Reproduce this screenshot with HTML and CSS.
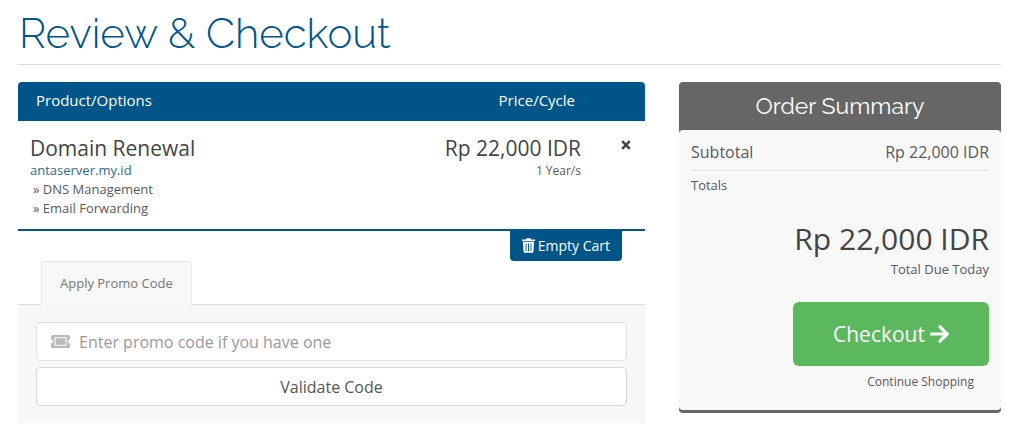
FILE: index.html
```
<!DOCTYPE html>
<html lang="en">

<head>
  <meta charset="UTF-8">
  <meta name="viewport" content="width=device-width, initial-scale=1.0">
  <title>Review &amp; Checkout</title>
  <link rel="stylesheet" href="styles.css">
</head>

<body>
  <div class="container">
    <h1 class="page-title">Review &amp; Checkout</h1>

    <div class="columns">
      <main class="cart">
        <table class="cart-items">
          <thead>
            <tr>
              <th>Product/Options</th>
              <th class="price">Price/Cycle</th>
              <th class="remove"></th>
            </tr>
          </thead>
          <tbody>
            <tr>
              <td>
                <div class="item-title">Domain Renewal</div>
                <a class="item-domain" href="#">antaserver.my.id</a>
                <ul class="item-addons">
                  <li>» DNS Management</li>
                  <li>» Email Forwarding</li>
                </ul>
              </td>
              <td class="price">
                <div class="item-price">Rp 22,000 IDR</div>
                <div class="item-cycle">1 Year/s</div>
              </td>
              <td class="remove">
                <button type="button" class="btn-remove" aria-label="Remove">
                  <svg width="10" height="10" viewBox="0 0 10 10">
                    <path d="M1.2 1.2 8.8 8.8M8.8 1.2 1.2 8.8" fill="none" stroke="currentColor" stroke-width="2.6" />
                  </svg>
                </button>
              </td>
            </tr>
          </tbody>
        </table>

        <div class="empty-cart">
          <button type="button" class="btn-empty">
            <svg width="13" height="15" viewBox="0 0 13 15">
              <path d="M0 1.6h3.8L4.6.3h3.8l.8 1.3H13v1.6H0z" fill="currentColor" />
              <path fill-rule="evenodd" d="M1 4h11l-.5 9.4q-.1 1.4-1.5 1.4H3q-1.4 0-1.5-1.4zM3.6 5.6v7.4h.9V5.6zM6 5.6v7.4h1V5.6zM8.5 5.6v7.4h.9V5.6z" fill="currentColor" />
            </svg>
            <span>Empty Cart</span>
          </button>
        </div>

        <!-- Promo code tab -->
        <div class="tabs">
          <button type="button" class="tab">Apply Promo Code</button>
        </div>
        <form class="promo">
          <div class="field">
            <label for="promocode" aria-label="Promo code">
              <svg width="19" height="13" viewBox="0 0 19 13">
                <path fill-rule="evenodd" d="M1.5 0h16Q19 0 19 1.5v3a2 2 0 0 0 0 4v3q0 1.5-1.5 1.5h-16Q0 13 0 11.5v-3a2 2 0 0 0 0-4v-3Q0 0 1.5 0zM3.5 2.2v8.6h12V2.2z" fill="currentColor" />
                <path d="M4.5 3.2h10v6.6h-10z" fill="currentColor" />
              </svg>
            </label>
            <input type="text" id="promocode" placeholder="Enter promo code if you have one">
          </div>
          <button type="button" class="btn-validate">Validate Code</button>
        </form>
      </main>

      <aside class="summary">
        <h2>Order Summary</h2>
        <div class="summary-body">
          <div class="subtotal">
            <span>Subtotal</span>
            <span>Rp 22,000 IDR</span>
          </div>
          <div class="totals">Totals</div>
          <div class="total-due">
            <span class="amount">Rp 22,000 IDR</span>
            <span>Total Due Today</span>
          </div>
          <div class="actions">
            <button type="button" class="btn-checkout">
              <span>Checkout</span>
              <svg width="19" height="18" viewBox="0 0 19 18">
                <path d="M1.5 9h15M10 1.8 17.2 9 10 16.2" fill="none" stroke="currentColor" stroke-width="3.2" stroke-linecap="round" stroke-linejoin="round" />
              </svg>
            </button>
            <a class="continue" href="#">Continue Shopping</a>
          </div>
        </div>
      </aside>
    </div>
  </div>
</body>

</html>
```
FILE: styles.css
```
* {
  box-sizing: border-box;
}

body {
  margin: 0;
  background-color: #fff;
  color: #58595b;
  font-family: 'Open Sans', sans-serif;
  font-size: 13px;
  line-height: 19px;
}

button,
input {
  font-family: inherit;
}

button {
  cursor: pointer;
}

a {
  text-decoration: none;
}

.container {
  padding: 10px 23px 16px 18px;
}

.page-title {
  margin: 0 0 17px;
  padding: 0 1px 6px;
  border-bottom: 1px solid #ddd;
  color: #058;
  font-family: Raleway, Lato, sans-serif;
  font-size: 42px;
  font-weight: 300;
  line-height: 48px;
}

.columns {
  display: grid;
  grid-template-columns: minmax(0, 1fr) 322px;
  gap: 34px;
  align-items: start;
}

/* Cart items */
.cart-items {
  width: 100%;
  border-collapse: separate;
  border-spacing: 0;
  border-bottom: 2px solid #058;
}

.cart-items th {
  padding: 9px 18px 11px;
  background-color: #058;
  color: #fff;
  font-size: 15px;
  font-weight: 400;
  text-align: left;
}

.cart-items th:first-child {
  border-top-left-radius: 4px;
}

.cart-items th:last-child {
  border-top-right-radius: 4px;
}

.cart-items td {
  padding: 14px 12px 11px;
  vertical-align: top;
}

.cart-items .price {
  text-align: right;
}

.cart-items .remove {
  width: 52px;
  text-align: right;
}

.cart-items td.remove {
  padding: 15px 14px 0;
}

.item-title,
.item-price {
  color: #444;
  font-size: 21px;
  line-height: 26px;
}

.item-domain {
  display: block;
  color: #336b8c;
}

.item-addons {
  margin: 0;
  padding: 0 0 0 3px;
  list-style: none;
}

.item-cycle {
  font-size: 12px;
}

.btn-remove {
  padding: 0;
  border: 0;
  background: none;
  color: #444;
}

.empty-cart {
  display: flex;
  justify-content: flex-end;
  padding-right: 23px;
}

.btn-empty {
  display: flex;
  align-items: center;
  gap: 3px;
  padding: 5px 12px 6px;
  border: 0;
  border-radius: 0 0 4px 4px;
  background-color: #058;
  color: #fff;
  font-size: 14px;
  line-height: 19px;
}

/* Promo code */
.tabs {
  display: flex;
  padding-left: 23px;
  border-bottom: 1px solid #ddd;
}

.tab {
  margin-bottom: -1px;
  padding: 12px 18px;
  border: 1px solid #e8e8e8;
  border-bottom: 0;
  border-radius: 4px 4px 0 0;
  background-color: #f8f8f8;
  color: #777;
  font-size: 13px;
  line-height: 19px;
}

.promo {
  padding: 17px 18px;
  background-color: #f7f7f7;
}

.field {
  position: relative;
  margin-bottom: 6px;
}

.field label {
  position: absolute;
  top: 0;
  bottom: 0;
  left: 15px;
  display: flex;
  align-items: center;
  color: #bbb;
}

.field input {
  display: block;
  width: 100%;
  height: 39px;
  padding: 0 14px 0 42px;
  border: 1px solid #e4e4e4;
  border-radius: 4px;
  background-color: #fff;
  box-shadow: inset 0 1px 1px rgba(0, 0, 0, 0.06);
  color: #555;
  font-size: 16px;
}

.field input::placeholder {
  color: #999;
}

.btn-validate {
  display: block;
  width: 100%;
  height: 39px;
  border: 1px solid #d8d8d8;
  border-radius: 4px;
  background-color: #fff;
  color: #555;
  font-size: 16px;
}

/* Order summary */
.summary {
  border-bottom: 3px solid #666;
  border-radius: 4px;
  background-color: #666;
}

.summary h2 {
  margin: 0;
  padding: 9px;
  color: #fff;
  font-family: Raleway, Lato, sans-serif;
  font-size: 23px;
  font-weight: 400;
  line-height: 30px;
  text-align: center;
}

.summary-body {
  padding: 10px 12px 13px;
  border-radius: 4px;
  background-color: #f8f8f8;
}

.subtotal {
  display: flex;
  justify-content: space-between;
  padding: 3px 0 8px;
  border-bottom: 1px solid #e2e2e2;
  font-size: 16px;
}

.totals {
  padding: 5px 0;
}

.total-due {
  padding: 18px 0 23px;
  text-align: right;
}

.total-due span {
  display: block;
}

.total-due .amount {
  color: #444;
  font-size: 30px;
  line-height: 42px;
}

.actions {
  display: flex;
  flex-direction: column;
  align-items: flex-end;
}

.btn-checkout {
  display: flex;
  align-items: center;
  gap: 5px;
  padding: 18px 40px;
  border: 0;
  border-radius: 6px;
  background-color: #5cb85c;
  color: #fff;
  font-size: 21px;
  line-height: 28px;
}

.continue {
  padding: 6px 15px;
  color: #58595b;
  font-size: 12px;
}
```
